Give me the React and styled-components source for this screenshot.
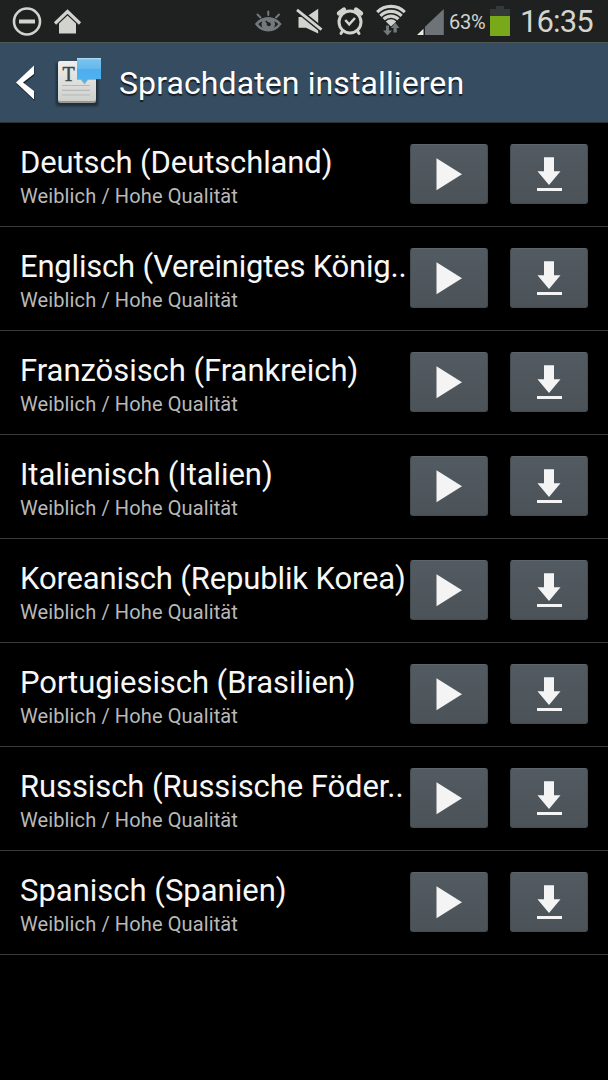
import React from "react";
import styled, { createGlobalStyle } from "styled-components";

const GlobalStyle = createGlobalStyle`
  body {
    margin: 0;
    background-color: #000;
    font-family: Roboto, "Noto Sans", sans-serif;
  }
`;

const Screen = styled.div`
  width: 608px;
  height: 1080px;
  overflow: hidden;
  background-color: #000;
`;

const StatusBar = styled.div`
  box-sizing: border-box;
  height: 43px;
  display: flex;
  justify-content: space-between;
  background-color: #1e2120;
  border-bottom: 1px solid #50585a;
`;

const StatusGroup = styled.div`
  display: flex;
`;

const StatusIcon = styled.svg`
  display: block;
  flex: none;
  width: ${(props) => props.$width}px;
  height: 42px;
`;

const Percent = styled.span`
  width: 40px;
  margin-left: 5px;
  font-size: 20px;
  line-height: 45px;
  letter-spacing: -0.3px;
  color: #d2d3cf;
`;

const Clock = styled.span`
  width: 88px;
  margin-left: 9px;
  font-size: 31px;
  line-height: 43px;
  letter-spacing: -0.9px;
  color: #d4d4d0;
`;

const Header = styled.header`
  box-sizing: border-box;
  height: 80px;
  display: flex;
  align-items: center;
  background-color: #354c61;
  border-bottom: 1px solid #2c2d2e;
`;

const HeaderIcon = styled.svg`
  display: block;
  flex: none;
  width: 110px;
  height: 79px;
`;

const HeaderTitle = styled.h1`
  margin: 0;
  padding: 1px 0 0 9px;
  font-size: 32px;
  font-weight: 400;
  line-height: 40px;
  letter-spacing: 0.1px;
  white-space: nowrap;
  color: #fff;
  text-shadow: 0 2px 1px #161d24;
`;

const List = styled.ul`
  margin: 0;
  padding: 0;
  list-style: none;
`;

const Row = styled.li`
  box-sizing: border-box;
  height: 104px;
  display: flex;
  align-items: flex-start;
  padding: 21px 20px 0;
  border-bottom: 1px solid #3a3b3c;
`;

const Info = styled.div`
  flex: 1;
  min-width: 0;
`;

const Name = styled.div`
  font-size: 31px;
  line-height: 37px;
  white-space: nowrap;
  letter-spacing: ${(props) => props.$spacing}px;
  color: #f7f7f7;
`;

const Quality = styled.div`
  font-size: 20px;
  line-height: 30px;
  letter-spacing: 0.12px;
  white-space: nowrap;
  color: #b9b9b9;
`;

const Actions = styled.div`
  display: flex;
  gap: 22px;
`;

const Button = styled.button`
  width: 78px;
  height: 60px;
  padding: 0;
  border: 1px solid #434c51;
  border-top-color: #5c656b;
  border-radius: 3px;
  background: linear-gradient(#535b62, #4b5358);
`;

const Glyph = styled.svg`
  display: block;
  width: 76px;
  height: 58px;
  fill: #f4f4f4;
`;

const languages = [
  { name: "Deutsch (Deutschland)", spacing: -0.11 },
  { name: "Englisch (Vereinigtes König..", spacing: -0.2 },
  { name: "Französisch (Frankreich)", spacing: -0.04 },
  { name: "Italienisch (Italien)", spacing: -0.07 },
  { name: "Koreanisch (Republik Korea)", spacing: -0.14 },
  { name: "Portugiesisch (Brasilien)", spacing: -0.06 },
  { name: "Russisch (Russische Föder..", spacing: -0.09 },
  { name: "Spanisch (Spanien)", spacing: 0 },
];

const NotificationIcons = () => (
  <StatusIcon $width={100} viewBox="0 0 100 42">
    <circle cx="27" cy="21.5" r="13" fill="none" stroke="#d2d3cf" strokeWidth="2.6" />
    <rect x="19" y="19.5" width="16" height="4" fill="#d2d3cf" />
    <path d="M59 23.5 67.5 15.5 76 23.5V33.5H59Z" fill="#d2d3cf" />
    <path d="M55 23.5 67.5 11.5 80 23.5" fill="none" stroke="#d2d3cf" strokeWidth="3.2" />
  </StatusIcon>
);

// eye, muted speaker, alarm, wifi and signal strength
const SystemIcons = () => (
  <StatusIcon $width={190} viewBox="254 0 190 42">
    <g fill="none" stroke="#74797c">
      <path d="M256.5 24C262.5 16.8 274 16.8 280 24C274 32.2 262.5 32.2 256.5 24Z" strokeWidth="2.6" />
      <path d="M257.5 14.5 260.5 17.5M268.3 11.5V15M279 14.5 276 17.5" strokeWidth="2" strokeLinecap="round" />
    </g>
    <circle cx="268.3" cy="24" r="6.8" fill="#74797c" />
    <path d="M265.8 21 268.5 24" stroke="#1e2120" strokeWidth="1.8" />
    <circle cx="268.8" cy="24.2" r="2" fill="#1e2120" />

    <path d="M298.5 17H306L318.2 8.8V33.5L306 27.7H298.5Z" fill="#d2d3cf" />
    <path d="M297.5 10 321.5 29.5" stroke="#1e2120" strokeWidth="5.8" />
    <path d="M297 9.8 321.5 29.7" stroke="#d2d3cf" strokeWidth="2.8" />

    <g fill="none" stroke="#d2d3cf">
      <circle cx="350" cy="22" r="11" strokeWidth="3" />
      <path d="M345.3 20 349.2 24.3 355 18" strokeWidth="2.5" />
      <path d="M339 13.3 344 9.5M361 13.3 356 9.5" strokeWidth="4.4" strokeLinecap="round" />
      <path d="M342.8 30.5 341 33.5M357.2 30.5 359 33.5" strokeWidth="3" strokeLinecap="round" />
    </g>

    <g fill="none" stroke="#d2d3cf" strokeWidth="3.1">
      <path d="M377.2 12.2A19.2 19.2 0 0 1 404.8 12.2" />
      <path d="M380.4 15.8A14.8 14.8 0 0 1 401.6 15.8" />
      <path d="M383.6 19.2A10.4 10.4 0 0 1 398.4 19.2" />
    </g>
    <path d="M385.8 21.4A7.2 7.2 0 0 1 396.2 21.4L391 26.5Z" fill="#d2d3cf" />
    <path d="M386 25.5H389V30.5H392L387.5 35.5 383 30.5H386Z" fill="#74797c" />
    <path d="M393.5 32.5H396.8V28H399.5L395.2 22.5 391 28H393.5Z" fill="#74797c" />

    <path d="M425 26.8 443.8 9V35H425Z" fill="#6d7377" />
    <path d="M417 35 423.5 28.8V35Z" fill="#e8e8e5" />
  </StatusIcon>
);

const Battery = () => (
  <StatusIcon $width={22} viewBox="489 0 22 42">
    <path d="M490 9H496V6H504V9H510V16H490Z" fill="#333839" />
    <rect x="490" y="16" width="20" height="20" fill="#78a91b" />
  </StatusIcon>
);

const AppIcon = () => (
  <HeaderIcon viewBox="0 43 110 79">
    <defs>
      <linearGradient id="page" x1="0" y1="0" x2="0" y2="1">
        <stop offset="0" stopColor="#eeeeeb" />
        <stop offset="1" stopColor="#d0d1ce" />
      </linearGradient>
      <linearGradient id="bubble" x1="0" y1="0" x2="0" y2="1">
        <stop offset="0" stopColor="#7bc4ef" />
        <stop offset="0.42" stopColor="#66b9ee" />
        <stop offset="0.46" stopColor="#4eaded" />
        <stop offset="1" stopColor="#50b3f1" />
      </linearGradient>
      <filter id="soft">
        <feGaussianBlur stdDeviation="1.3" />
      </filter>
    </defs>
    <path d="M34.5 67V75L23.5 84 34.5 93V101L16.5 84Z" fill="#17212a" />
    <path d="M34 65.5V74L23 82.5 34 91V99.5L16 82.5Z" fill="#fff" />
    <rect x="56" y="63" width="42" height="43" rx="2" fill="#17222c" opacity="0.7" filter="url(#soft)" />
    <rect x="58" y="62" width="38" height="41" rx="2" fill="#969995" />
    <rect x="58" y="61" width="38" height="40" rx="2" fill="url(#page)" />
    <path d="M62 85.5H90M62 90.3H90M62 95H90" stroke="#b6b9b6" strokeWidth="1.2" />
    <text
      x="62.5"
      y="80.5"
      fontFamily="Liberation Serif, serif"
      fontSize="20"
      fill="#3c474e"
      stroke="#3c474e"
      strokeWidth="0.5"
    >
      T
    </text>
    <path d="M77 60H101V80H88L84.5 84.5 81 80H77Z" fill="#59666d" opacity="0.4" />
    <path d="M77 58H101V79H88L84.5 83 81 79H77Z" fill="url(#bubble)" />
    <path d="M77 58.7H101" stroke="#b9def2" strokeWidth="1" />
  </HeaderIcon>
);

const PlayIcon = () => (
  <Glyph viewBox="0 0 76 58">
    <path d="M25.5 13.3V45.3L51 29.3Z" />
  </Glyph>
);

const DownloadIcon = () => (
  <Glyph viewBox="0 0 76 58">
    <path d="M33 12.3H43V26.3H49.5L38 40 26.5 26.3H33Z" />
    <rect x="26" y="43" width="25" height="3" />
  </Glyph>
);

const LanguageRow = (props) => {
  return (
    <Row>
      <Info>
        <Name $spacing={props.item.spacing}>{props.item.name}</Name>
        <Quality>Weiblich / Hohe Qualität</Quality>
      </Info>
      <Actions>
        <Button aria-label="Anhören">
          <PlayIcon />
        </Button>
        <Button aria-label="Herunterladen">
          <DownloadIcon />
        </Button>
      </Actions>
    </Row>
  );
};

const App = () => {
  return (
    <Screen>
      <GlobalStyle />
      <StatusBar>
        <NotificationIcons />
        <StatusGroup>
          <SystemIcons />
          <Percent>63%</Percent>
          <Battery />
          <Clock>16:35</Clock>
        </StatusGroup>
      </StatusBar>
      <Header>
        <AppIcon />
        <HeaderTitle>Sprachdaten installieren</HeaderTitle>
      </Header>
      <List>
        {languages.map((item) => (
          <LanguageRow item={item} key={item.name} />
        ))}
      </List>
    </Screen>
  );
};

export default App;
